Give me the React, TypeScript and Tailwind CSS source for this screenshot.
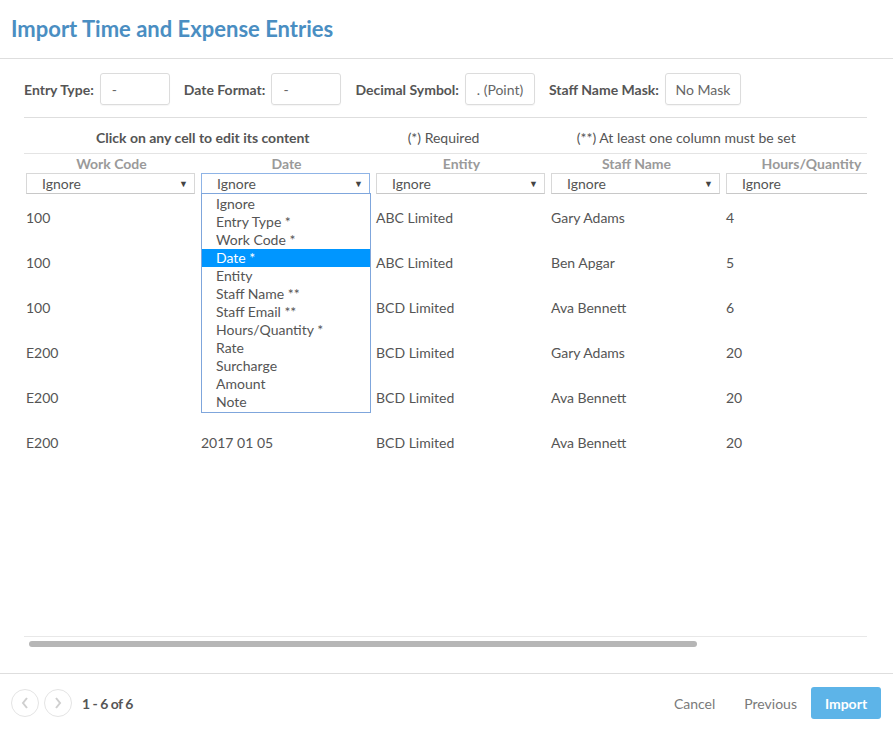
import React from "react";

const cols = ["Work Code", "Date", "Entity", "Staff Name", "Hours/Quantity"];
const rows = [
  ["100", "", "ABC Limited", "Gary Adams", "4"],
  ["100", "", "ABC Limited", "Ben Apgar", "5"],
  ["100", "", "BCD Limited", "Ava Bennett", "6"],
  ["E200", "", "BCD Limited", "Gary Adams", "20"],
  ["E200", "", "BCD Limited", "Ava Bennett", "20"],
  ["E200", "2017 01 05", "BCD Limited", "Ava Bennett", "20"],
];
const options = [
  "Ignore",
  "Entry Type *",
  "Work Code *",
  "Date *",
  "Entity",
  "Staff Name **",
  "Staff Email **",
  "Hours/Quantity *",
  "Rate",
  "Surcharge",
  "Amount",
  "Note",
];

function Field({ label, value, w }: { label: string; value: string; w: string }) {
  return (
    <div className="flex items-center">
      <span className="text-[14px] font-bold text-[#555]">{label}</span>
      <div
        className={`ml-[6px] h-[32px] ${w} flex items-center border border-[#dcdcdc] rounded-[3px] shadow-[0_1px_1px_rgba(0,0,0,0.04)] text-[14px] text-[#666]`}
      >
        {value}
      </div>
    </div>
  );
}

export default function App() {
  return (
    <div
      className="w-[893px] h-[734px] bg-white flex flex-col overflow-hidden"
      style={{ fontFamily: "Lato, 'Open Sans', sans-serif" }}
    >
      <div className="h-[59px] shrink-0 border-b border-[#dedede] px-[11px] flex items-center">
        <h1 className="text-[22px] font-bold text-[#4a8ec2] leading-none">
          Import Time and Expense Entries
        </h1>
      </div>

      <div className="flex-1 pl-[24px] pr-[26px] flex flex-col min-h-0">
        <div className="pt-[14px] pb-[12px] border-b border-[#dedede] flex items-center gap-[14px]">
          <Field label="Entry Type:" value="-" w="w-[70px] pl-[11px]" />
          <Field label="Date Format:" value="-" w="w-[70px] pl-[11px]" />
          <Field label="Decimal Symbol:" value=". (Point)" w="w-[70px] justify-center" />
          <Field label="Staff Name Mask:" value="No Mask" w="w-[76px] justify-center" />
        </div>

        <div className="h-[36px] pt-[4px] border-b border-[#e4e4e4] flex items-center text-[14px] text-[#555]">
          <span className="w-[358px] text-center font-bold">Click on any cell to edit its content</span>
          <span className="w-[124px] text-center">(*) Required</span>
          <span className="w-[362px] text-center">(**) At least one column must be set</span>
        </div>

        <div className="relative flex-1 overflow-hidden border-b border-[#e8e8e8]">
          <div className="flex w-[900px]">
            {cols.map((c, i) => (
              <div key={c} className="w-[175px] shrink-0 flex flex-col">
                <div className="h-[19px] text-center text-[14px] font-bold text-[#9a9a9a] leading-[19px]">
                  {c}
                </div>
                <div
                  className={`ml-[2px] w-[169px] h-[21px] flex items-center justify-between pl-[15px] pr-[6px] text-[14px] text-[#555] ${
                    i === 1
                      ? "border border-[#8fb4e6]"
                      : "border border-[#d8d8d8] border-b-[#c8c8c8]"
                  }`}
                >
                  <span>Ignore</span>
                  {i < 4 && <span className="text-[9px] text-[#444]">▼</span>}
                </div>
                <div className="pt-[1px]">
                  {rows.map((r, j) => (
                    <div
                      key={j}
                      className="h-[45px] flex items-center pl-[2px] text-[14px] text-[#555]"
                    >
                      {r[i]}
                    </div>
                  ))}
                </div>
              </div>
            ))}
          </div>

          <div className="absolute left-[177px] top-[39px] w-[170px] bg-white border border-[#7fa6dc] py-[1px]">
            {options.map((o) => (
              <div
                key={o}
                className={`h-[18px] leading-[18px] pl-[14px] text-[14px] ${
                  o === "Date *" ? "bg-[#0096ff] text-white" : "text-[#555]"
                }`}
              >
                {o}
              </div>
            ))}
          </div>
        </div>

        <div className="h-[36px] shrink-0 pt-[4px] pl-[5px]">
          <div className="w-[668px] h-[6px] rounded-full bg-[#b6b6b6]" />
        </div>
      </div>

      <div className="h-[61px] shrink-0 border-t border-[#dedede] flex items-center pl-[11px] pr-[12px] pb-[2px]">
        <div className="w-[28px] h-[28px] rounded-full border border-[#e4e4e4] flex items-center justify-center">
          <svg width="10" height="14" viewBox="0 0 10 14">
            <path d="M7 2 L3 7 L7 12" fill="none" stroke="#cfcfcf" strokeWidth="2" />
          </svg>
        </div>
        <div className="ml-[5px] w-[28px] h-[28px] rounded-full border border-[#e4e4e4] flex items-center justify-center">
          <svg width="10" height="14" viewBox="0 0 10 14">
            <path d="M3 2 L7 7 L3 12" fill="none" stroke="#cfcfcf" strokeWidth="2" />
          </svg>
        </div>
        <span className="ml-[10px] text-[14px] font-bold text-[#555] tracking-[-0.5px]">1 - 6 of 6</span>
        <div className="flex-1" />
        <span className="text-[14px] text-[#7a7a7a]">Cancel</span>
        <span className="ml-[29px] text-[14px] text-[#7a7a7a]">Previous</span>
        <button className="ml-[14px] w-[70px] h-[32px] rounded-[3px] bg-[#5db4e8] text-white text-[14px] font-bold">
          Import
        </button>
      </div>
    </div>
  );
}
